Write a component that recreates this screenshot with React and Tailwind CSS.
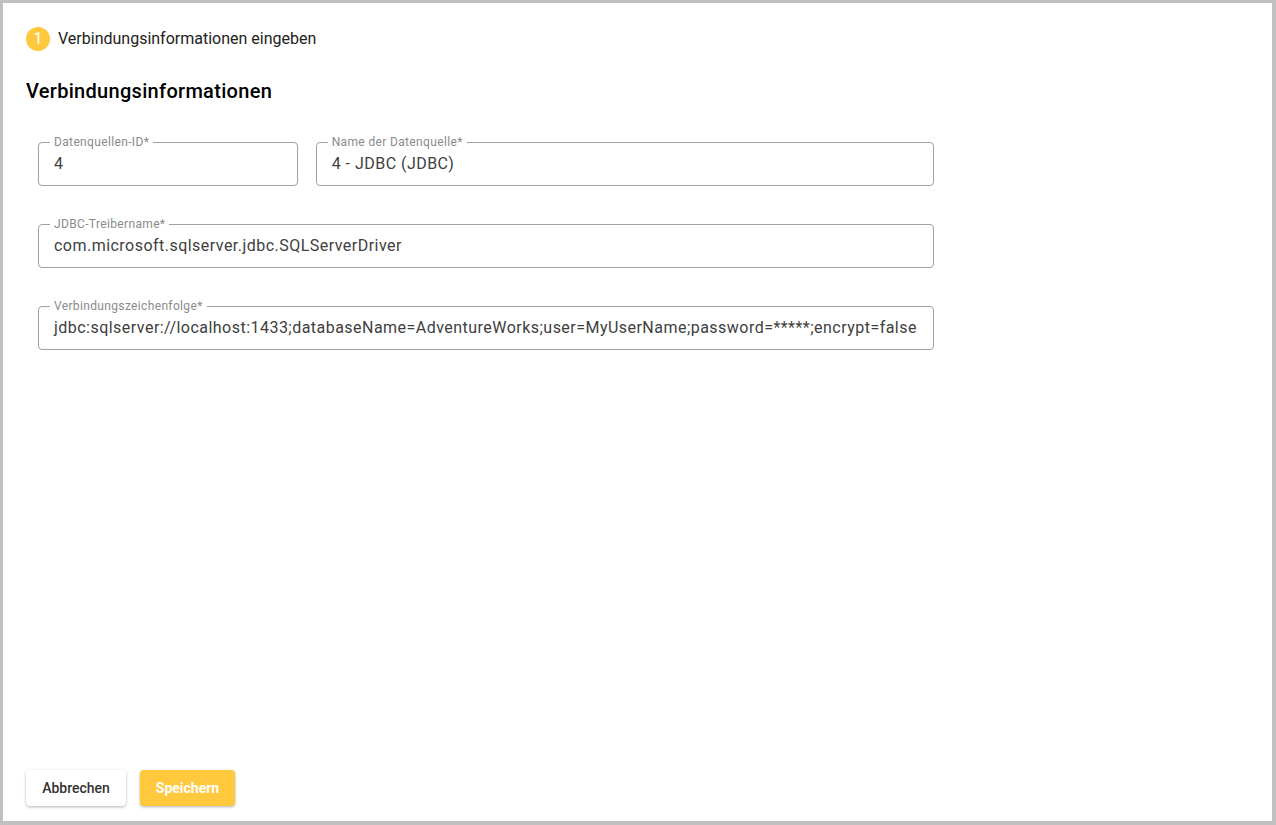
import React from "react";

function Field({ label, value, className = "" }) {
  return (
    <div className={`relative h-[44px] rounded border border-[#a0a0a0] ${className}`}>
      <span className="absolute -top-[8px] left-[11px] bg-white px-[4px] text-[12px] leading-[14px] tracking-[0.35px] text-[#8a8a8a]">
        {label}
      </span>
      <div className="flex h-full items-center px-[15px] text-[16px] tracking-[0.47px] text-[#404040] whitespace-nowrap overflow-hidden">
        {value}
      </div>
    </div>
  );
}

export default function App() {
  return (
    <div
      className="flex h-[825px] w-[1276px] flex-col border-b-4 border-l-[3px] border-r-4 border-t-[3px] border-[#c0c0c0] bg-white px-[23px] pb-[15px] pt-[24px]"
      style={{ fontFamily: "Roboto, 'Liberation Sans', sans-serif" }}
    >
      <div className="flex items-center gap-[8px]">
        <div className="flex h-[24px] w-[24px] items-center justify-center rounded-full bg-[#ffc83d] text-[16px] text-white">
          1
        </div>
        <span className="text-[16px] text-[#222]">Verbindungsinformationen eingeben</span>
      </div>

      <h2 className="mt-[26px] text-[20px] font-medium leading-[28px] tracking-[0.3px] text-black">
        Verbindungsinformationen
      </h2>

      <div className="ml-[12px] mt-[37px] flex w-[896px] flex-col gap-[38px]">
        <div className="flex gap-[18px]">
          <Field label="Datenquellen-ID*" value="4" className="w-[260px]" />
          <Field label="Name der Datenquelle*" value="4 - JDBC (JDBC)" className="w-[619px]" />
        </div>
        <Field label="JDBC-Treibername*" value="com.microsoft.sqlserver.jdbc.SQLServerDriver" />
        <Field
          label="Verbindungszeichenfolge*"
          value="jdbc:sqlserver://localhost:1433;databaseName=AdventureWorks;user=MyUserName;password=*****;encrypt=false"
        />
      </div>

      <div className="flex-1" />

      <div className="flex gap-[14px]">
        <button className="h-[36px] w-[100px] rounded bg-white text-[14px] font-medium text-[#333] shadow-[0_1px_3px_rgba(0,0,0,0.3)]">
          Abbrechen
        </button>
        <button className="h-[36px] w-[95px] rounded bg-[#ffc83d] text-[14px] font-bold text-white shadow-[0_1px_3px_rgba(0,0,0,0.3)]">
          Speichern
        </button>
      </div>
    </div>
  );
}
